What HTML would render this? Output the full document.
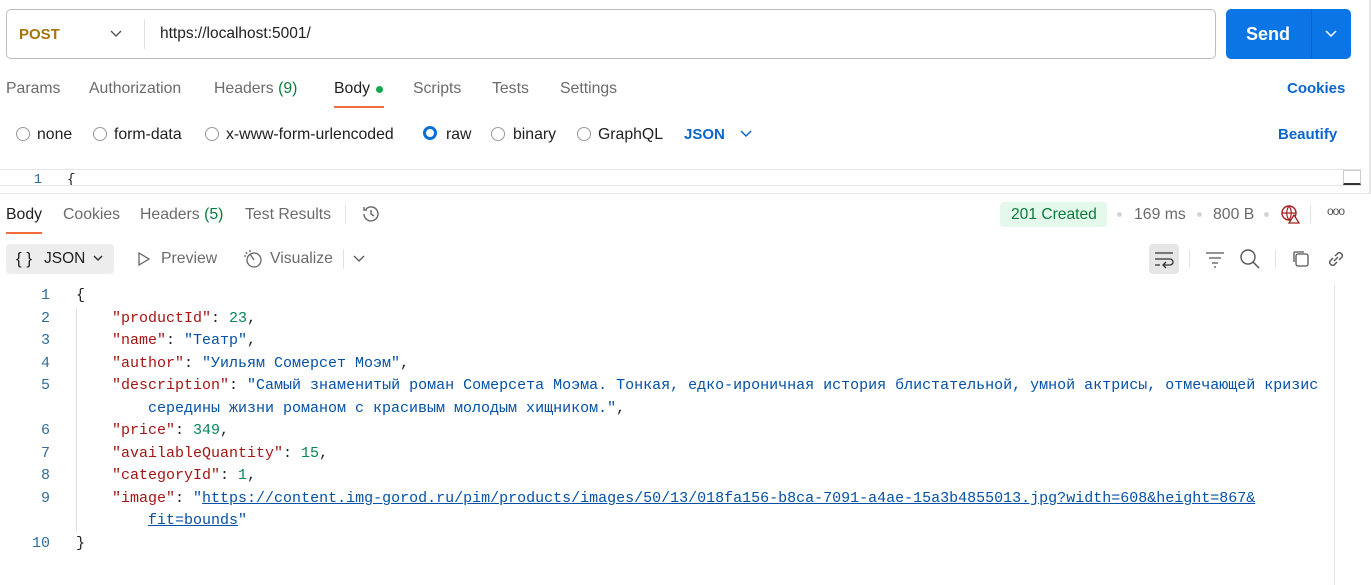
<!DOCTYPE html>
<html><head><meta charset="utf-8"><style>
*{margin:0;padding:0;box-sizing:border-box}
body{width:1371px;height:585px;overflow:hidden;background:#fff;font-family:"Liberation Sans",sans-serif;color:#212121;position:relative}
.a{position:absolute;white-space:nowrap}
.t{font-size:15.8px;color:#6b6b6b}
.code{font-family:"Liberation Mono","DejaVu Sans Mono",monospace;font-size:15px}
.ln{color:#2f6d9c;text-align:right;width:24px}
.k{color:#a31515}.s{color:#0451a5}.n{color:#098658}.p{color:#212121}
.radio{position:absolute;width:14px;height:14px;border:1px solid #9a9a9a;border-radius:50%}
</style></head><body>
<!-- URL bar -->
<div class="a" style="left:6px;top:9px;width:1210px;height:50px;border:1px solid #bdbdbd;border-radius:5px"></div>
<div class="a" style="left:19px;top:26px;font-size:15px;font-weight:bold;color:#a8730a">POST</div>
<svg class="a" style="left:109px;top:28px" width="14" height="12" viewBox="0 0 14 12"><path d="M2 3l5 5 5-5" stroke="#555" fill="none" stroke-width="1.4"/></svg>
<div class="a" style="left:144px;top:19px;width:1px;height:30px;background:#e2e2e2"></div>
<div class="a" style="left:160px;top:25px;font-size:15.5px;color:#212121">https://localhost:5001/</div>
<div class="a" style="left:1226px;top:9px;width:125px;height:50px;background:#0b75e6;border-radius:5px"></div>
<div class="a" style="left:1311px;top:9px;width:1px;height:50px;background:#0a64c6"></div>
<div class="a" style="left:1246px;top:24px;font-size:18px;font-weight:bold;color:#fff">Send</div>
<svg class="a" style="left:1324px;top:28px" width="14" height="12" viewBox="0 0 14 12"><path d="M2 3l5 5 5-5" stroke="#fff" fill="none" stroke-width="1.5"/></svg>
<div class="a" style="left:1369px;top:0;width:2px;height:193px;background:#e6e6e6"></div>
<!-- request tabs -->
<div class="a t" style="left:6px;top:80px">Params</div>
<div class="a t" style="left:89px;top:80px">Authorization</div>
<div class="a t" style="left:214px;top:80px">Headers <span style="color:#0a7d3b">(9)</span></div>
<div class="a t" style="left:334px;top:80px;color:#212121">Body</div>
<div class="a" style="left:376px;top:86px;width:7px;height:7px;border-radius:50%;background:#11a94c"></div>
<div class="a" style="left:334px;top:106px;width:50px;height:2px;background:#f26b3a"></div>
<div class="a t" style="left:413px;top:80px">Scripts</div>
<div class="a t" style="left:492px;top:80px">Tests</div>
<div class="a t" style="left:560px;top:80px">Settings</div>
<div class="a" style="left:1287px;top:80px;font-size:15px;font-weight:bold;color:#0a66cf">Cookies</div>
<!-- radio row -->
<div class="radio" style="left:16px;top:127px"></div><div class="a t" style="left:37px;top:126px;color:#212121">none</div>
<div class="radio" style="left:93px;top:127px"></div><div class="a t" style="left:114px;top:126px;color:#212121">form-data</div>
<div class="radio" style="left:205px;top:127px"></div><div class="a t" style="left:226px;top:126px;color:#212121">x-www-form-urlencoded</div>
<div class="radio" style="left:423px;top:126px;border:3px solid #0b6fd8"></div><div class="a t" style="left:446px;top:126px;color:#212121">raw</div>
<div class="radio" style="left:491px;top:127px"></div><div class="a t" style="left:513px;top:126px;color:#212121">binary</div>
<div class="radio" style="left:577px;top:127px"></div><div class="a t" style="left:598px;top:126px;color:#212121">GraphQL</div>
<div class="a" style="left:684px;top:126px;font-size:15px;font-weight:bold;color:#0a66cf">JSON</div>
<svg class="a" style="left:739px;top:128px" width="14" height="12" viewBox="0 0 14 12"><path d="M2 3l5 5 5-5" stroke="#0a66cf" fill="none" stroke-width="1.5"/></svg>
<div class="a" style="left:1278px;top:126px;font-size:15px;font-weight:bold;color:#0a66cf">Beautify</div>
<!-- editor strip -->
<div class="a" style="left:0;top:169px;width:1361px;height:1px;background:#e4e4e4"></div>
<div class="a" style="left:0;top:185px;width:1361px;height:1px;background:#e4e4e4"></div>
<div class="a code ln" style="left:18px;top:172px;font-size:14px;height:13px;overflow:hidden">1</div>
<div class="a code" style="left:67px;top:172px;font-size:14px;height:13px;overflow:hidden">{</div>
<div class="a" style="left:1343px;top:170px;width:18px;height:15px;border:1px solid #ccc;border-bottom:2px solid #333"></div>
<div class="a" style="left:0;top:193px;width:1371px;height:1px;background:#e4e4e4"></div>
<!-- response tabs -->
<div class="a t" style="left:6px;top:206px;color:#212121">Body</div>
<div class="a" style="left:6px;top:232px;width:36px;height:2px;background:#f26b3a"></div>
<div class="a t" style="left:63px;top:206px">Cookies</div>
<div class="a t" style="left:140px;top:206px">Headers <span style="color:#0a7d3b">(5)</span></div>
<div class="a t" style="left:245px;top:206px">Test Results</div>
<div class="a" style="left:345px;top:205px;width:1px;height:18px;background:#e2e2e2"></div>
<svg class="a" style="left:361px;top:204px" width="20" height="20" viewBox="0 0 20 20"><path d="M3 10a7 7 0 1 0 2-5M3 3v3h3M10 6v4l3 2" stroke="#666" fill="none" stroke-width="1.4"/></svg>
<div class="a" style="left:1000px;top:202px;width:107px;height:25px;background:#e5f8ec;border-radius:4px"></div>
<div class="a" style="left:1011px;top:206px;font-size:15.6px;color:#0b7b3a">201 Created</div>
<div class="a" style="left:1117px;top:212px;width:5px;height:5px;border-radius:50%;background:#d6d6d6"></div>
<div class="a t" style="left:1134px;top:206px">169 ms</div>
<div class="a" style="left:1197px;top:212px;width:5px;height:5px;border-radius:50%;background:#d6d6d6"></div>
<div class="a t" style="left:1213px;top:206px">800 B</div>
<div class="a" style="left:1264px;top:212px;width:5px;height:5px;border-radius:50%;background:#d6d6d6"></div>
<svg class="a" style="left:1280px;top:204px" width="20" height="20" viewBox="0 0 20 20"><circle cx="9" cy="9" r="7" stroke="#a32020" fill="none" stroke-width="1.4"/><path d="M2 9h14M9 2c-3 4-3 10 0 14M9 2c3 4 3 10 0 14" stroke="#a32020" fill="none" stroke-width="1.2"/><path d="M14 11l5 8h-10z" fill="#fff" stroke="#a32020" stroke-width="1.3"/></svg>
<div class="a" style="left:1310px;top:205px;width:1px;height:18px;background:#e2e2e2"></div>
<div class="a" style="left:1327px;top:204px;font-size:12px;color:#555;letter-spacing:-1px">ooo</div>
<!-- toolbar -->
<div class="a" style="left:6px;top:244px;width:108px;height:30px;background:#ededed;border-radius:4px"></div>
<div class="a" style="left:16px;top:249px;font-size:17px;color:#212121">{ }</div>
<div class="a" style="left:44px;top:250px;font-size:15.5px;color:#212121">JSON</div>
<svg class="a" style="left:92px;top:253px" width="12" height="10" viewBox="0 0 12 10"><path d="M2 3l4 4 4-4" stroke="#333" fill="none" stroke-width="1.5"/></svg>
<svg class="a" style="left:136px;top:251px" width="16" height="16" viewBox="0 0 16 16"><path d="M3 2l10 6-10 6z" stroke="#666" fill="none" stroke-width="1.3"/></svg>
<div class="a t" style="left:161px;top:250px">Preview</div>
<svg class="a" style="left:242px;top:248px" width="22" height="22" viewBox="0 0 22 22"><circle cx="12" cy="12" r="7" stroke="#666" fill="none" stroke-width="1.3"/><path d="M12 12l-4-6M4 4l1 2M8 2v2M2 8h2" stroke="#666" fill="none" stroke-width="1.3"/></svg>
<div class="a t" style="left:270px;top:250px">Visualize</div>
<div class="a" style="left:343px;top:249px;width:1px;height:20px;background:#e2e2e2"></div>
<svg class="a" style="left:352px;top:254px" width="14" height="10" viewBox="0 0 14 10"><path d="M2 2l5 5 5-5" stroke="#555" fill="none" stroke-width="1.3"/></svg>
<div class="a" style="left:1149px;top:244px;width:30px;height:30px;background:#e6e6e6;border-radius:4px"></div>
<svg class="a" style="left:1153px;top:249px" width="22" height="20" viewBox="0 0 22 20"><path d="M2 4h18M2 10h15a3 3 0 0 1 0 6h-6M13 13l-3 3 3 3M2 16h5" stroke="#333" fill="none" stroke-width="1.3"/></svg>
<div class="a" style="left:1189px;top:250px;width:1px;height:18px;background:#e2e2e2"></div>
<svg class="a" style="left:1205px;top:250px" width="20" height="18" viewBox="0 0 20 18"><path d="M1 3h18M4 8h12M7 13h6M9 17h2" stroke="#555" fill="none" stroke-width="1.3"/></svg>
<svg class="a" style="left:1239px;top:248px" width="22" height="22" viewBox="0 0 22 22"><circle cx="9" cy="9" r="7" stroke="#555" fill="none" stroke-width="1.4"/><path d="M14 14l6 6" stroke="#555" stroke-width="1.5"/></svg>
<div class="a" style="left:1275px;top:250px;width:1px;height:18px;background:#e2e2e2"></div>
<svg class="a" style="left:1291px;top:249px" width="20" height="20" viewBox="0 0 20 20"><rect x="5" y="5" width="12" height="12" rx="2" stroke="#555" fill="none" stroke-width="1.3"/><path d="M3 13V4a1 1 0 0 1 1-1h9" stroke="#555" fill="none" stroke-width="1.3"/></svg>
<svg class="a" style="left:1325px;top:248px" width="22" height="22" viewBox="0 0 22 22"><path d="M9 13l4-4M8 10l-3 3a3 3 0 0 0 4 4l3-3M14 12l3-3a3 3 0 0 0-4-4l-3 3" stroke="#555" fill="none" stroke-width="1.4"/></svg>
<!-- response code -->
<div class="a" style="left:1334px;top:285px;width:1px;height:300px;background:#e2e2e2"></div>
<div class="a" style="left:76px;top:308px;width:1px;height:224px;background:#dcdcdc"></div>
<div class="code">
<div class="a ln" style="left:26px;top:287px">1</div><div class="a p" style="left:76px;top:287px">{</div>
<div class="a ln" style="left:26px;top:310px">2</div><div class="a" style="left:112px;top:310px"><span class="k">"productId"</span>: <span class="n">23</span>,</div>
<div class="a ln" style="left:26px;top:332px">3</div><div class="a" style="left:112px;top:332px"><span class="k">"name"</span>: <span class="s">"Театр"</span>,</div>
<div class="a ln" style="left:26px;top:355px">4</div><div class="a" style="left:112px;top:355px"><span class="k">"author"</span>: <span class="s">"Уильям Сомерсет Моэм"</span>,</div>
<div class="a ln" style="left:26px;top:377px">5</div><div class="a" style="left:112px;top:377px"><span class="k">"description"</span>: <span class="s">"Самый знаменитый роман Сомерсета Моэма. Тонкая, едко-ироничная история блистательной, умной актрисы, отмечающей кризис</span></div>
<div class="a s" style="left:148px;top:400px">середины жизни романом с красивым молодым хищником."<span class="p">,</span></div>
<div class="a ln" style="left:26px;top:422px">6</div><div class="a" style="left:112px;top:422px"><span class="k">"price"</span>: <span class="n">349</span>,</div>
<div class="a ln" style="left:26px;top:445px">7</div><div class="a" style="left:112px;top:445px"><span class="k">"availableQuantity"</span>: <span class="n">15</span>,</div>
<div class="a ln" style="left:26px;top:467px">8</div><div class="a" style="left:112px;top:467px"><span class="k">"categoryId"</span>: <span class="n">1</span>,</div>
<div class="a ln" style="left:26px;top:490px">9</div><div class="a" style="left:112px;top:490px"><span class="k">"image"</span>: <span class="s">"<span style="text-decoration:underline">https://content.img-gorod.ru/pim/products/images/50/13/018fa156-b8ca-7091-a4ae-15a3b4855013.jpg?width=608&amp;height=867&amp;</span></span></div>
<div class="a s" style="left:148px;top:512px"><span style="text-decoration:underline">fit=bounds</span>"</div>
<div class="a ln" style="left:26px;top:535px">10</div><div class="a p" style="left:76px;top:535px">}</div>
</div>
</body></html>
